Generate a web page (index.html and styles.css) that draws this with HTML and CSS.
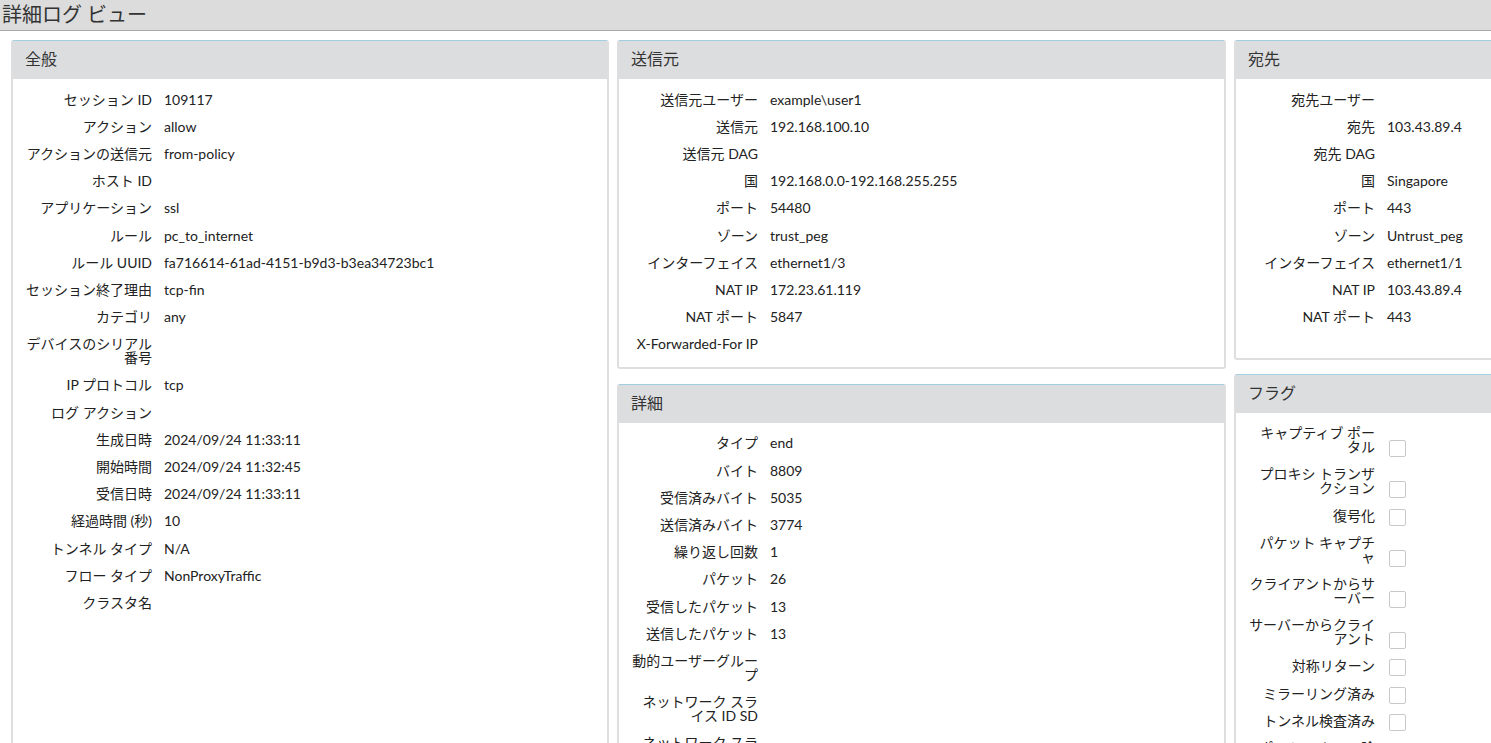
FILE: index.html
```html
<!DOCTYPE html>
<html lang="ja">
<head>
    <meta charset="UTF-8">
    <title>詳細ログ ビュー</title>
    <link rel="stylesheet" href="styles.css">
</head>
<body>
    <div class="titlebar">詳細ログ ビュー</div>

    <div class="content">
        <div class="column col-general">
            <div class="panel panel-fill">
                <div class="panel-header">全般</div>
                <div class="panel-body">
                    <div class="row"><span class="label">セッション ID</span><span class="value">109117</span></div>
                    <div class="row"><span class="label">アクション</span><span class="value">allow</span></div>
                    <div class="row"><span class="label">アクションの送信元</span><span class="value">from-policy</span></div>
                    <div class="row"><span class="label">ホスト ID</span><span class="value"></span></div>
                    <div class="row"><span class="label">アプリケーション</span><span class="value">ssl</span></div>
                    <div class="row"><span class="label">ルール</span><span class="value">pc_to_internet</span></div>
                    <div class="row"><span class="label">ルール UUID</span><span class="value">fa716614-61ad-4151-b9d3-b3ea34723bc1</span></div>
                    <div class="row"><span class="label">セッション終了理由</span><span class="value">tcp-fin</span></div>
                    <div class="row"><span class="label">カテゴリ</span><span class="value">any</span></div>
                    <div class="row"><span class="label">デバイスのシリアル番号</span><span class="value"></span></div>
                    <div class="row"><span class="label">IP プロトコル</span><span class="value">tcp</span></div>
                    <div class="row"><span class="label">ログ アクション</span><span class="value"></span></div>
                    <div class="row"><span class="label">生成日時</span><span class="value">2024/09/24 11:33:11</span></div>
                    <div class="row"><span class="label">開始時間</span><span class="value">2024/09/24 11:32:45</span></div>
                    <div class="row"><span class="label">受信日時</span><span class="value">2024/09/24 11:33:11</span></div>
                    <div class="row"><span class="label">経過時間 (秒)</span><span class="value">10</span></div>
                    <div class="row"><span class="label">トンネル タイプ</span><span class="value">N/A</span></div>
                    <div class="row"><span class="label">フロー タイプ</span><span class="value">NonProxyTraffic</span></div>
                    <div class="row"><span class="label">クラスタ名</span><span class="value"></span></div>
                </div>
            </div>
        </div>

        <div class="column col-middle">
            <div class="panel">
                <div class="panel-header">送信元</div>
                <div class="panel-body">
                    <div class="row"><span class="label">送信元ユーザー</span><span class="value">example\user1</span></div>
                    <div class="row"><span class="label">送信元</span><span class="value">192.168.100.10</span></div>
                    <div class="row"><span class="label">送信元 DAG</span><span class="value"></span></div>
                    <div class="row"><span class="label">国</span><span class="value">192.168.0.0-192.168.255.255</span></div>
                    <div class="row"><span class="label">ポート</span><span class="value">54480</span></div>
                    <div class="row"><span class="label">ゾーン</span><span class="value">trust_peg</span></div>
                    <div class="row"><span class="label">インターフェイス</span><span class="value">ethernet1/3</span></div>
                    <div class="row"><span class="label">NAT IP</span><span class="value">172.23.61.119</span></div>
                    <div class="row"><span class="label">NAT ポート</span><span class="value">5847</span></div>
                    <div class="row"><span class="label">X-Forwarded-For IP</span><span class="value"></span></div>
                </div>
            </div>

            <div class="panel">
                <div class="panel-header">詳細</div>
                <div class="panel-body">
                    <div class="row"><span class="label">タイプ</span><span class="value">end</span></div>
                    <div class="row"><span class="label">バイト</span><span class="value">8809</span></div>
                    <div class="row"><span class="label">受信済みバイト</span><span class="value">5035</span></div>
                    <div class="row"><span class="label">送信済みバイト</span><span class="value">3774</span></div>
                    <div class="row"><span class="label">繰り返し回数</span><span class="value">1</span></div>
                    <div class="row"><span class="label">パケット</span><span class="value">26</span></div>
                    <div class="row"><span class="label">受信したパケット</span><span class="value">13</span></div>
                    <div class="row"><span class="label">送信したパケット</span><span class="value">13</span></div>
                    <div class="row"><span class="label">動的ユーザーグループ</span><span class="value"></span></div>
                    <div class="row"><span class="label">ネットワーク スライス ID SD</span><span class="value"></span></div>
                    <div class="row"><span class="label">ネットワーク スライス タイプ</span><span class="value"></span></div>
                    <div class="row"><span class="label">送信元 VM UUID</span><span class="value"></span></div>
                    <div class="row"><span class="label">宛先 VM UUID</span><span class="value"></span></div>
                </div>
            </div>
        </div>

        <div class="column col-right">
            <div class="panel panel-dst">
                <div class="panel-header">宛先</div>
                <div class="panel-body">
                    <div class="row"><span class="label">宛先ユーザー</span><span class="value"></span></div>
                    <div class="row"><span class="label">宛先</span><span class="value">103.43.89.4</span></div>
                    <div class="row"><span class="label">宛先 DAG</span><span class="value"></span></div>
                    <div class="row"><span class="label">国</span><span class="value">Singapore</span></div>
                    <div class="row"><span class="label">ポート</span><span class="value">443</span></div>
                    <div class="row"><span class="label">ゾーン</span><span class="value">Untrust_peg</span></div>
                    <div class="row"><span class="label">インターフェイス</span><span class="value">ethernet1/1</span></div>
                    <div class="row"><span class="label">NAT IP</span><span class="value">103.43.89.4</span></div>
                    <div class="row"><span class="label">NAT ポート</span><span class="value">443</span></div>
                </div>
            </div>

            <div class="panel">
                <div class="panel-header">フラグ</div>
                <div class="panel-body">
                    <div class="row flag"><span class="label">キャプティブ ポータル</span><input type="checkbox" class="check" disabled></div>
                    <div class="row flag"><span class="label">プロキシ トランザクション</span><input type="checkbox" class="check" disabled></div>
                    <div class="row flag"><span class="label">復号化</span><input type="checkbox" class="check" disabled></div>
                    <div class="row flag"><span class="label">パケット キャプチャ</span><input type="checkbox" class="check" disabled></div>
                    <div class="row flag"><span class="label">クライアントからサーバー</span><input type="checkbox" class="check" disabled></div>
                    <div class="row flag"><span class="label">サーバーからクライアント</span><input type="checkbox" class="check" disabled></div>
                    <div class="row flag"><span class="label">対称リターン</span><input type="checkbox" class="check" disabled></div>
                    <div class="row flag"><span class="label">ミラーリング済み</span><input type="checkbox" class="check" disabled></div>
                    <div class="row flag"><span class="label">トンネル検査済み</span><input type="checkbox" class="check" disabled></div>
                    <div class="row flag"><span class="label">ポート スキャン除外</span><input type="checkbox" class="check" disabled></div>
                </div>
            </div>
        </div>
    </div>
</body>
</html>
```

FILE: styles.css
```css
html, body {
    overflow: hidden;
}
body {
    margin: 0;
    font-family: Lato, "Noto Sans CJK JP", sans-serif;
    font-size: 14px;
    color: #222;
    background-color: #fff;
}
.titlebar {
    height: 30px;
    line-height: 28px;
    padding-left: 2px;
    font-size: 20px;
    color: #333;
    background-color: #dcdcdc;
    border-bottom: 1px solid #a8a8a8;
}
.content {
    display: flex;
    align-items: stretch;
    gap: 8px;
    padding: 9px 0 0 11px;
    width: 1600px;
}
.column {
    display: flex;
    flex-direction: column;
    gap: 15px;
    flex: none;
}
.col-general {
    width: 598px;
}
.col-middle {
    width: 609px;
}
.col-right {
    width: 300px;
    gap: 14px;
}
.panel {
    border: 2px solid #dedede;
    border-top: 1px solid #a3cfe2;
    border-radius: 3px;
    background-color: #fff;
}
.panel-fill {
    flex: 1;
}
.panel-header {
    height: 38px;
    line-height: 36px;
    padding-left: 12px;
    font-size: 16px;
    color: #333;
    background-color: #dcdddf;
}
.panel-body {
    padding: 7px 0 9px;
}
.panel-dst .panel-body {
    padding-bottom: 27px;
}
.row {
    display: grid;
    grid-template-columns: 127px 1fr;
    column-gap: 12px;
    padding: 6.6px 0 6.6px 12px;
    line-height: 14px;
}
.label {
    text-align: right;
}
.value {
    white-space: nowrap;
}
.row.flag {
    align-items: end;
}
.check {
    appearance: none;
    -webkit-appearance: none;
    width: 17px;
    height: 17px;
    margin: 0 0 -3px 2px;
    border: 1px solid #c9c9c9;
    border-radius: 2px;
    background-color: #fff;
}
```
